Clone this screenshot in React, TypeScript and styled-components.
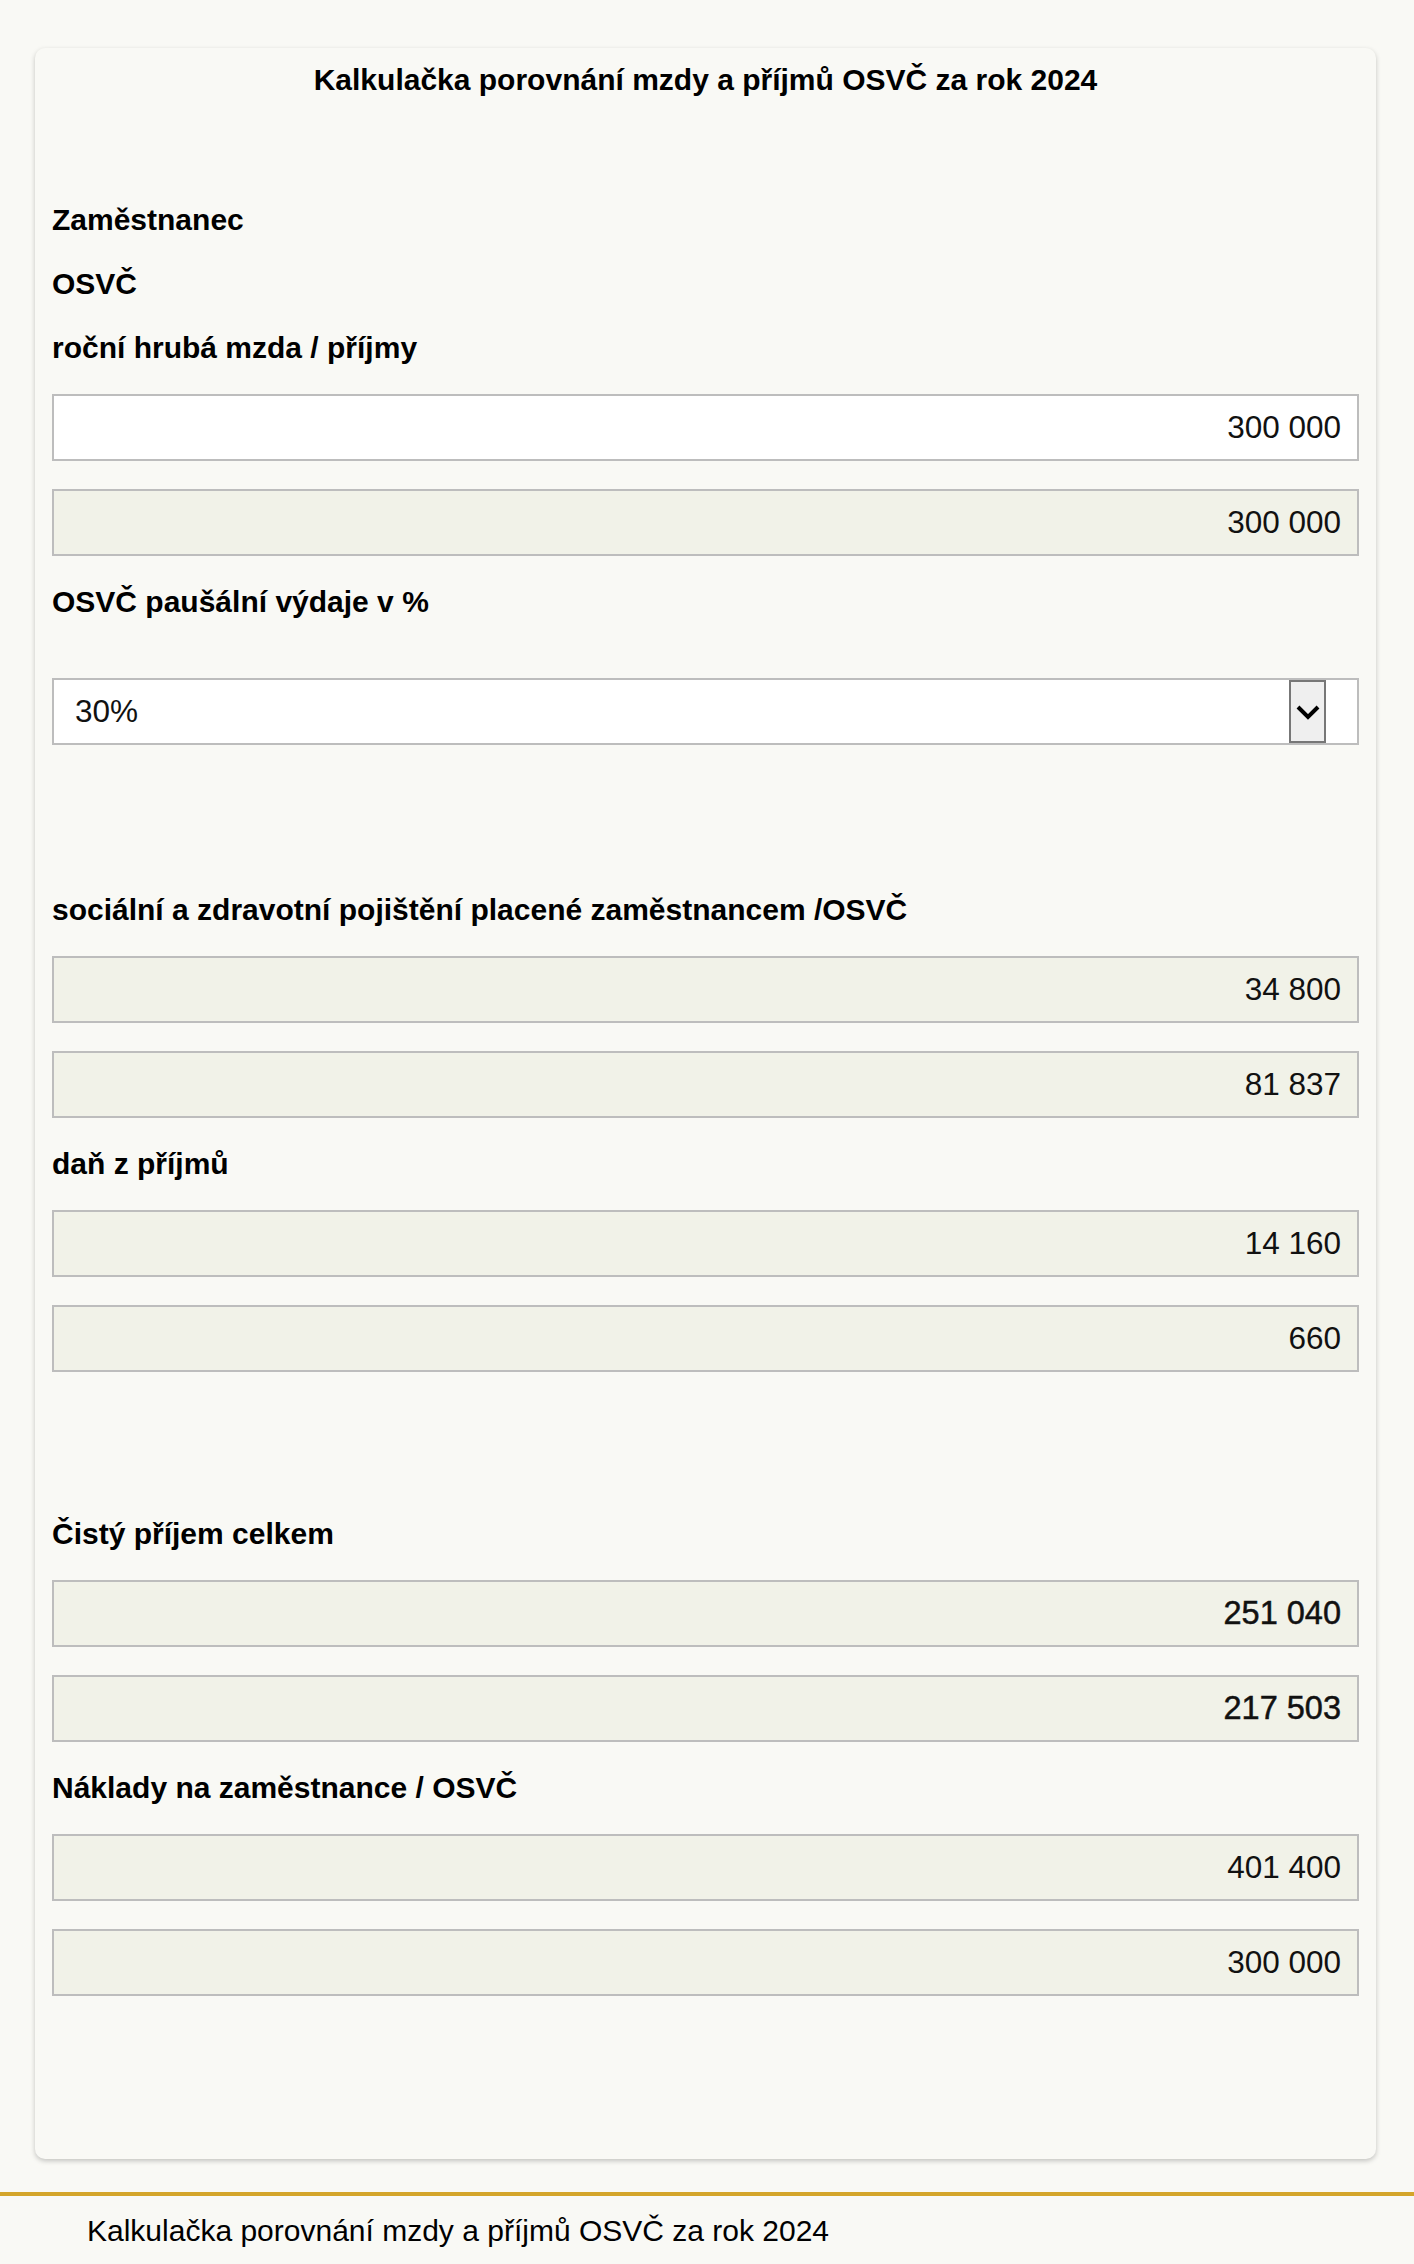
import React from 'react';
import styled, { createGlobalStyle } from 'styled-components';

const GlobalStyle = createGlobalStyle`
  body {
    margin: 0;
    background: #f9f9f5;
    font-family: "Liberation Sans", Arial, sans-serif;
    color: #000;
  }
`;

const Page = styled.div`
  padding: 48px 38px 0 35px;
`;

const Card = styled.div`
  background: #f9f9f5;
  border-radius: 10px;
  box-shadow: 0 2px 5px rgba(0, 0, 0, 0.22);
  padding: 14px 17px 163px;
  display: flex;
  flex-direction: column;
  gap: 28px;
`;

const Title = styled.h1`
  margin: 0 0 76px;
  font-size: 30px;
  line-height: 36px;
  font-weight: 700;
  text-align: center;
`;

const Label = styled.div<{ $extra?: number }>`
  font-size: 30px;
  line-height: 36px;
  font-weight: 700;
  margin-bottom: ${p => p.$extra ?? 0}px;
`;

const Spacer = styled.div<{ $h: number }>`
  height: ${p => p.$h}px;
`;

const Field = styled.input<{ $strong?: boolean; $editable?: boolean }>`
  box-sizing: border-box;
  display: block;
  width: 100%;
  height: 67px;
  margin: 0;
  padding: 0 16px;
  border: 2px solid #bdbdbd;
  border-radius: 0;
  background: ${p => (p.$editable ? '#ffffff' : '#f1f2e8')};
  font-family: "Liberation Sans", Arial, sans-serif;
  font-size: ${p => (p.$strong ? '32.5px' : '31.5px')};
  color: #111;
  text-align: right;
  -webkit-text-stroke: ${p => (p.$strong ? '0.5px #111' : '0')};
  outline: none;
`;

const SelectBox = styled.div`
  box-sizing: border-box;
  height: 67px;
  border: 2px solid #bdbdbd;
  background: #ffffff;
  display: flex;
  align-items: center;
  padding-left: 21px;
  font-size: 31.5px;
  color: #111;
`;

const SelectValue = styled.span`
  flex: 1;
`;

const ArrowButton = styled.span`
  box-sizing: border-box;
  width: 37px;
  height: 63px;
  margin-right: 31px;
  background: #efefef;
  border: 2px solid #777;
  display: flex;
  align-items: center;
  justify-content: center;
`;

const Footer = styled.footer`
  margin-top: 33px;
  border-top: 4px solid #d4a52a;
  padding: 17px 0 16px 87px;
  font-size: 30px;
  line-height: 36px;
`;

const Chevron = () => (
  <svg width="24" height="16" viewBox="0 0 24 16">
    <path d="M2 3 L12 13 L22 3" fill="none" stroke="#000" strokeWidth="4" />
  </svg>
);

const rows = [
  { label: 'sociální a zdravotní pojištění placené zaměstnancem /OSVČ', values: ['34 800', '81 837'] },
  { label: 'daň z příjmů', values: ['14 160', '660'] },
];

const App = () => {
  return (
    <>
      <GlobalStyle />
      <Page>
        <Card>
          <Title>Kalkulačka porovnání mzdy a příjmů OSVČ za rok 2024</Title>
          <Label>Zaměstnanec</Label>
          <Label>OSVČ</Label>
          <Label>roční hrubá mzda / příjmy</Label>
          <Field $editable defaultValue="300 000" />
          <Field readOnly defaultValue="300 000" />
          <Label $extra={30}>OSVČ paušální výdaje v %</Label>
          <SelectBox>
            <SelectValue>30%</SelectValue>
            <ArrowButton>
              <Chevron />
            </ArrowButton>
          </SelectBox>
          <Spacer $h={91} />
          {rows.map(r => (
            <React.Fragment key={r.label}>
              <Label>{r.label}</Label>
              {r.values.map(v => (
                <Field key={v} readOnly defaultValue={v} />
              ))}
            </React.Fragment>
          ))}
          <Spacer $h={88} />
          <Label>Čistý příjem celkem</Label>
          <Field readOnly $strong defaultValue="251 040" />
          <Field readOnly $strong defaultValue="217 503" />
          <Label>Náklady na zaměstnance / OSVČ</Label>
          <Field readOnly defaultValue="401 400" />
          <Field readOnly defaultValue="300 000" />
        </Card>
      </Page>
      <Footer>Kalkulačka porovnání mzdy a příjmů OSVČ za rok 2024</Footer>
    </>
  );
};

export default App;
